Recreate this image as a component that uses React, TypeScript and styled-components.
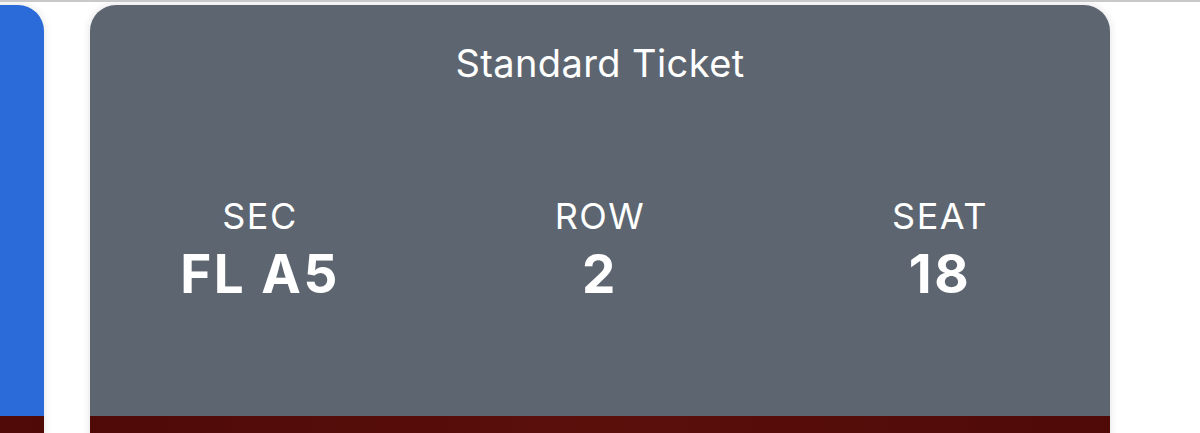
import React from "react";
import styled, { createGlobalStyle } from "styled-components";

const Global = createGlobalStyle`
  html, body { margin: 0; padding: 0; background: #ffffff; overflow: hidden; }
  body { font-family: Inter, "Noto Sans", Arial, sans-serif; }
`;

const Page = styled.div`
  width: 1200px;
  height: 433px;
  overflow: hidden;
  background: #ffffff;
  border-top: 2px solid #c9c9cb;
  box-sizing: border-box;
`;

const Track = styled.div`
  display: flex;
  gap: 46px;
  padding-top: 3px;
  margin-left: -976px;
`;

const Card = styled.div<{ $bg: string }>`
  flex: 0 0 1020px;
  height: 480px;
  border-radius: 26px;
  overflow: hidden;
  background: ${(p) => p.$bg};
  box-shadow: 0 0 8px rgba(0, 0, 0, 0.12);
  display: flex;
  flex-direction: column;
  color: #ffffff;
`;

const Body = styled.div`
  height: 411px;
  display: flex;
  flex-direction: column;
  align-items: stretch;
`;

const Title = styled.div`
  text-align: center;
  font-size: 38px;
  font-weight: 400;
  line-height: 44px;
  margin-top: 36px;
  letter-spacing: 0.4px;
`;

const Seats = styled.div`
  display: grid;
  grid-template-columns: repeat(3, 1fr);
  margin-top: 111px;
`;

const Cell = styled.div`
  display: flex;
  flex-direction: column;
  align-items: center;
`;

const Label = styled.div`
  font-size: 36px;
  line-height: 40px;
  font-weight: 400;
  letter-spacing: 1.5px;
`;

const Value = styled.div`
  font-size: 53px;
  line-height: 56px;
  font-weight: 700;
  margin-top: 10px;
  letter-spacing: 2.5px;
`;

const Banner = styled.div`
  flex: 1;
  background: linear-gradient(90deg, #4f0a08 0%, #5a0f0b 50%, #4f0a08 100%);
`;

const seats = [
  { label: "SEC", value: "FL A5" },
  { label: "ROW", value: "2" },
  { label: "SEAT", value: "18" },
];

export default function App() {
  return (
    <>
      <Global />
      <Page>
        <Track>
          <Card $bg="#2a6bd9">
            <Body />
            <Banner />
          </Card>
          <Card $bg="#5d6670">
            <Body>
              <Title>Standard Ticket</Title>
              <Seats>
                {seats.map((s) => (
                  <Cell key={s.label}>
                    <Label>{s.label}</Label>
                    <Value>{s.value}</Value>
                  </Cell>
                ))}
              </Seats>
            </Body>
            <Banner />
          </Card>
        </Track>
      </Page>
    </>
  );
}
